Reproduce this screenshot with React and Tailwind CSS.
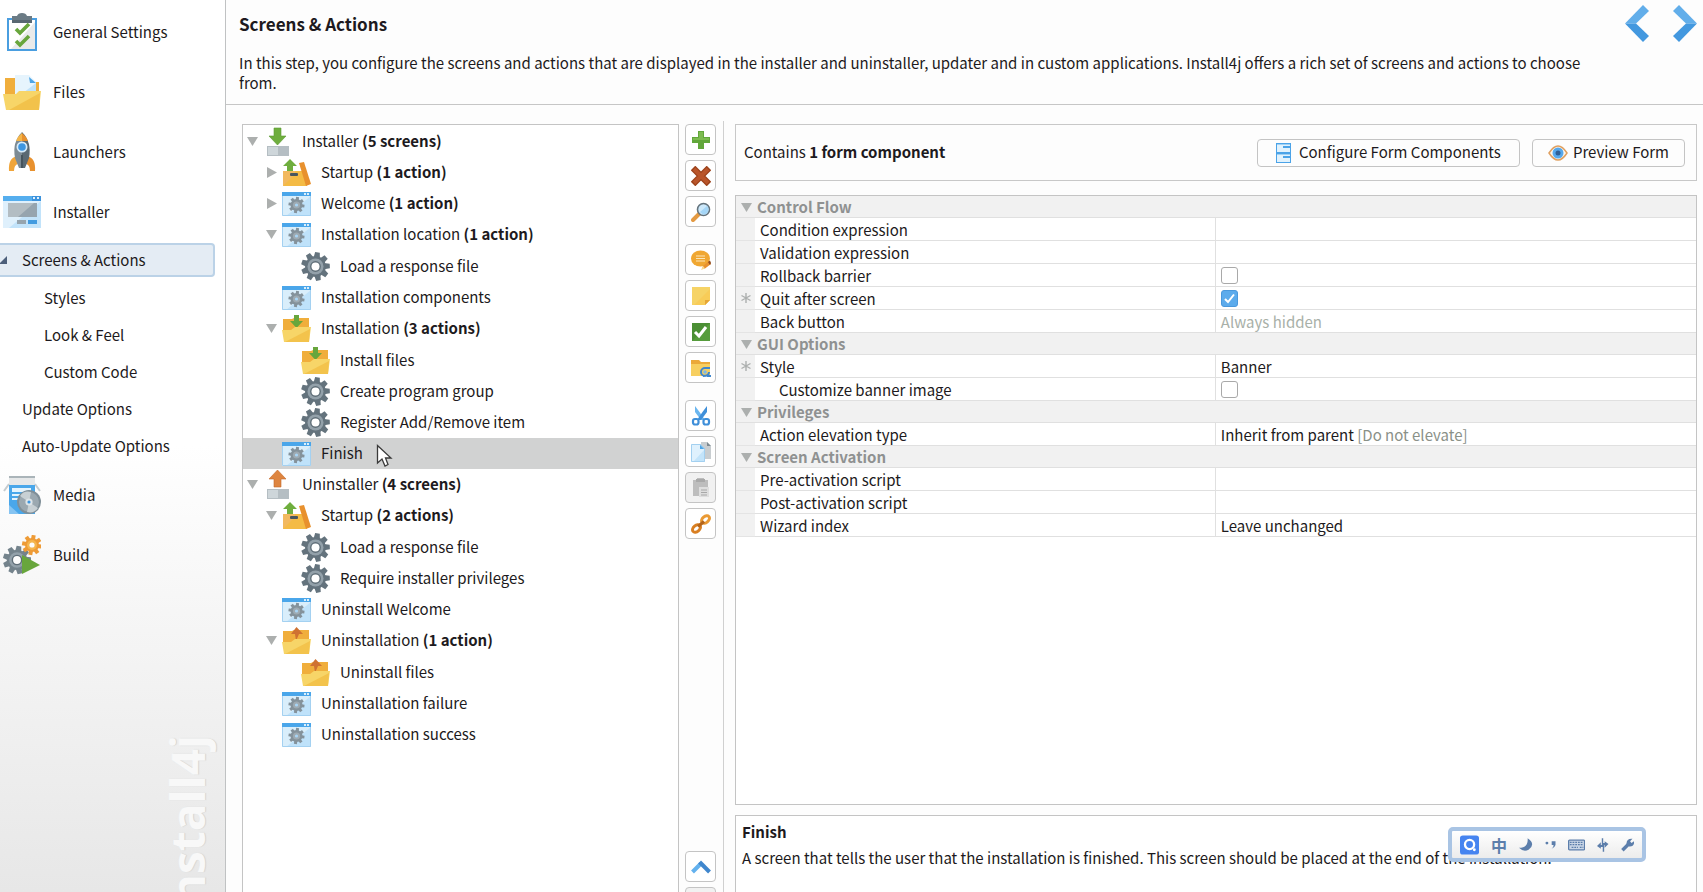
import { useState } from "react";

const GEAR_ANGLES = [0, 45, 90, 135, 180, 225, 270, 315];
const BIG_GEAR_ANGLES = [0, 40, 80, 120, 160, 200, 240, 280, 320];

function GearShape({ cx, cy, r, fill, hole }) {
	const w = r * 0.22;
	return (
		<g fill={fill}>
			{BIG_GEAR_ANGLES.map((a) => (
				<path
					key={a}
					d={`M${cx - w} ${cy - r * 0.6} L${cx - w * 0.75} ${cy - r} H${cx + w * 0.75} L${cx + w} ${cy - r * 0.6} Z`}
					transform={`rotate(${a + 8} ${cx} ${cy})`}
				/>
			))}
			<circle cx={cx} cy={cy} r={r * 0.73} />
			<circle cx={cx} cy={cy} r={r * 0.56} fill="#93a1aa" />
			<circle cx={cx} cy={cy} r={r * 0.38} fill="#5f6e78" />
			<circle cx={cx} cy={cy} r={r * 0.28} fill={hole} />
		</g>
	);
}

function ClipboardIcon() {
	return (
		<svg width="38" height="40" viewBox="0 0 38 40">
			<rect x="4" y="6" width="30" height="33" fill="#4a9ee0" />
			<rect x="6" y="8" width="26" height="29" fill="#ffffff" />
			<path d="M32 10 V37 H8 Z" fill="#e9eaea" />
			<path d="M9 4 H14 Q15 1 19 1 Q23 1 24 4 H29 V11 H9 Z" fill="#6b7b85" />
			<path d="M9 8 H29 V11 H9 Z" fill="#596872" />
			<path d="M13 17 L17 21 L26 12" fill="none" stroke="#68a63c" strokeWidth="3.6" />
			<path d="M13 29 L17 33 L26 24" fill="none" stroke="#68a63c" strokeWidth="3.6" />
		</svg>
	);
}

function FilesIcon() {
	return (
		<svg width="38" height="38" viewBox="0 0 38 38">
			<path d="M2 5 H12 V32 H2 Z" fill="#f0ae3c" />
			<path d="M30 9 H36 V30 H30 Z" fill="#f0ae3c" />
			<path d="M12 2 H26 L33 9 V22 H12 Z" fill="#e6f4fd" />
			<path d="M20 20 L33 10 V22 H18 Z" fill="#bfe2fa" />
			<path d="M26 4 L33 10 H27 Z" fill="#4ea5e6" />
			<path d="M0 21 H13 L16 18 H38 L36 37 H3 Z" fill="#f7d568" />
			<path d="M37 20 L36 37 H6 Z" fill="#f2c24b" />
		</svg>
	);
}

function RocketIcon() {
	return (
		<svg width="38" height="40" viewBox="0 0 38 40">
			<path d="M14 24 Q5 26 6 39 H11 Q11 33 15 32 Z" fill="#f0a53a" />
			<path d="M24 24 Q33 26 32 39 H27 Q27 33 23 32 Z" fill="#e8912e" />
			<path d="M19 0 Q9 10 12 26 L16 36 H19 Z" fill="#7d8b94" />
			<path d="M19 0 Q29 10 26 26 L22 36 H19 Z" fill="#5a6973" />
			<path d="M19 1 Q15 4 13 9 H19 Z" fill="#f4b548" />
			<path d="M19 1 Q23 4 25 9 H19 Z" fill="#e8912e" />
			<circle cx="19" cy="15" r="5.5" fill="#d6ebfa" />
			<circle cx="19" cy="15" r="3.8" fill="#3f96e0" />
			<path d="M18 23 H20 V36 H18 Z" fill="#46545d" />
		</svg>
	);
}

function InstallerIcon() {
	return (
		<svg width="38" height="32" viewBox="0 0 38 32">
			<rect width="38" height="32" fill="#dff0fc" />
			<path d="M38 5 V32 H6 Z" fill="#c2e3fa" />
			<rect width="38" height="5" fill="#55aeee" />
			<rect x="29" width="9" height="5" fill="#3c92dc" />
			<rect x="30" y="1" width="2" height="2" fill="#dff0fc" />
			<rect x="34" y="1" width="2" height="2" fill="#dff0fc" />
			<rect x="5" y="7" width="29" height="14" fill="#b3bdc3" />
			<path d="M34 7 V21 H15 L31 7 Z" fill="#96a4ae" />
			<rect x="14" y="24" width="9" height="4" fill="#96a4ae" />
			<rect x="25" y="24" width="9" height="4" fill="#429be0" />
		</svg>
	);
}

function MediaIcon() {
	return (
		<svg width="38" height="40" viewBox="0 0 38 40">
			<rect x="6" y="1" width="26" height="9" fill="#e6e8e9" />
			<rect x="6" y="1" width="26" height="2" fill="#aab4b9" />
			<path d="M6 9 L1 16 M32 9 L37 16" stroke="#c5ccd0" strokeWidth="2" fill="none" />
			<rect x="6" y="10" width="26" height="29" fill="#4aa7ea" />
			<path d="M6 39 V30 L16 39 Z" fill="#86c4f2" />
			<rect x="9" y="13" width="19" height="4" fill="#e5f4fd" />
			<path d="M9 20 H17 M9 24 H15" stroke="#e5f4fd" strokeWidth="2" />
			<circle cx="26" cy="27" r="12" fill="#808f98" />
			<circle cx="26" cy="27" r="10" fill="#9ba8b0" />
			<path d="M26 27 L17 21 A10 10 0 0 1 28 17 Z M26 27 L35 33 A10 10 0 0 1 24 37 Z" fill="#c8d0d4" />
			<circle cx="26" cy="27" r="3.6" fill="#dde4e8" />
			<circle cx="26" cy="27" r="1.6" fill="#3c96df" />
		</svg>
	);
}

function BuildIcon() {
	return (
		<svg width="38" height="40" viewBox="0 0 38 40">
			<GearShape cx={14} cy={25} r={14} fill="#74838c" hole="#fcfcfc" />
			<g fill="#ee9b36">
				{GEAR_ANGLES.map((a) => (
					<rect key={a} x="27" y="0" width="4" height="6" transform={`rotate(${a + 10} 29 10)`} />
				))}
				<circle cx="29" cy="10" r="7" />
				<circle cx="29" cy="10" r="5" fill="#f5b64e" />
				<circle cx="29" cy="10" r="2.6" fill="#fcfcfc" />
			</g>
			<path d="M19 20 L37 30 L19 39 Z" fill="#68a63c" />
		</svg>
	);
}

function DriveIcon({ up }) {
	return (
		<svg width="29" height="30" viewBox="0 0 29 30">
			<rect x="4" y="19" width="22" height="10" fill="#b5bec3" />
			<rect x="5" y="20" width="10" height="8" fill="#ced6da" />
			{up ? (
				<path d="M14.500 0 L23 9 H18 V17 H11 V9 H6 Z" fill="#de8540" stroke="#c4692a" strokeWidth="0.6" />
			) : (
				<path d="M11 1 H18 V9 H23 L14.500 18 L6 9 H11 Z" fill="#6fae3e" stroke="#5b9a33" strokeWidth="0.6" />
			)}
		</svg>
	);
}

function StartupIcon() {
	return (
		<svg width="29" height="29" viewBox="0 0 29 29">
			<path d="M1 13 H21 V28 H1 Z" fill="#f2b95f" />
			<path d="M13 13 H21 L25 28 H1 L13 16 Z" fill="#f4bb45" />
			<path d="M17 5 L22 4 L29 26 L24 28 Z" fill="#e8912e" />
			<rect x="8" y="15" width="8" height="3" rx="1" fill="#48565e" />
			<path d="M8 1 L15 8 H11 V13 H5 V8 H1 Z" fill="#6fae3e" />
		</svg>
	);
}

function WindowIcon() {
	return (
		<svg width="29" height="24" viewBox="0 0 29 24">
			<rect width="29" height="24" fill="#d9eefb" />
			<path d="M29 4 V24 H4 Z" fill="#bfe2fa" />
			<rect width="29" height="4" fill="#4aa6ea" />
			<path d="M22 1 H24 V3 H22 Z M25 1 H27 V3 H25 Z" fill="#d9eefb" />
			<path d="M0.500 4 V23.500 H28.500 V4" fill="none" stroke="#a4d1f1" />
			<g fill="#84929b">
				{GEAR_ANGLES.map((a) => (
					<rect key={a} x="13" y="5" width="3" height="5" transform={`rotate(${a + 8} 14.500 13)`} />
				))}
				<circle cx="14.500" cy="13" r="6" />
				<circle cx="14.500" cy="13" r="3.600" fill="#9eaab2" />
				<circle cx="14.500" cy="13" r="1.600" fill="#a8d5f5" />
			</g>
		</svg>
	);
}

function GearIcon() {
	return (
		<svg width="29" height="29" viewBox="0 0 29 29">
			<GearShape cx={14.5} cy={14.5} r={14.3} fill="#64737d" hole="#ffffff" />
		</svg>
	);
}

function FolderIcon({ up }) {
	return (
		<svg width="29" height="28" viewBox="0 0 29 28">
			<path d="M1 4 H10 L12 3 H27 V20 H1 Z" fill="#f0ae3c" />
			{up ? (
				<path d="M14.500 0 L21 7 H17 L14 14 L13 7 H9 Z" fill="#cf7232" />
			) : (
				<path d="M12 0 H17 V6 H21 L14.500 13 L8 6 H12 Z" fill="#68a63c" />
			)}
			<path d="M0 15 H9 L13 12 H29 L27 27 H2 Z" fill="#f7d568" />
			<path d="M28 14 L27 27 H3 Z" fill="#f3c34c" />
		</svg>
	);
}

const TREE_ICONS = {
	install: <DriveIcon />,
	uninstall: <DriveIcon up />,
	startup: <StartupIcon />,
	window: <WindowIcon />,
	gear: <GearIcon />,
	folderIn: <FolderIcon />,
	folderOut: <FolderIcon up />,
};

const TREE = [
	{
		label: "Installer",
		count: "(5 screens)",
		icon: "install",
		state: "open",
		children: [
			{ label: "Startup", count: "(1 action)", icon: "startup", state: "closed" },
			{ label: "Welcome", count: "(1 action)", icon: "window", state: "closed" },
			{
				label: "Installation location",
				count: "(1 action)",
				icon: "window",
				state: "open",
				children: [{ label: "Load a response file", icon: "gear" }],
			},
			{ label: "Installation components", icon: "window" },
			{
				label: "Installation",
				count: "(3 actions)",
				icon: "folderIn",
				state: "open",
				children: [
					{ label: "Install files", icon: "folderIn" },
					{ label: "Create program group", icon: "gear" },
					{ label: "Register Add/Remove item", icon: "gear" },
				],
			},
			{ label: "Finish", icon: "window" },
		],
	},
	{
		label: "Uninstaller",
		count: "(4 screens)",
		icon: "uninstall",
		state: "open",
		children: [
			{
				label: "Startup",
				count: "(2 actions)",
				icon: "startup",
				state: "open",
				children: [
					{ label: "Load a response file", icon: "gear" },
					{ label: "Require installer privileges", icon: "gear" },
				],
			},
			{ label: "Uninstall Welcome", icon: "window" },
			{
				label: "Uninstallation",
				count: "(1 action)",
				icon: "folderOut",
				state: "open",
				children: [{ label: "Uninstall files", icon: "folderOut" }],
			},
			{ label: "Uninstallation failure", icon: "window" },
			{ label: "Uninstallation success", icon: "window" },
		],
	},
];

const INDENTS = ["pl-0", "pl-[19px]", "pl-[38px]"];

function Triangle({ closed }) {
	return (
		<svg width="11" height="11" viewBox="0 0 11 11" fill="#acafae">
			{closed ? <path d="M1 0 L11 5.500 L1 11 Z" /> : <path d="M0 1 H11 L5.500 10 Z" />}
		</svg>
	);
}

function TreeNode({ node, depth, selected, onSelect }) {
	const active = selected === node.label;
	return (
		<li>
			<div className={`flex h-[31px] items-center ${INDENTS[depth]} ${active ? "bg-[#d1d2d2]" : ""}`}>
				<span className="flex w-5 shrink-0 pl-1">
					{node.state && (
						<button type="button" aria-label={`Toggle ${node.label}`}>
							<Triangle closed={node.state === "closed"} />
						</button>
					)}
				</span>
				<button
					type="button"
					onClick={() => onSelect(node.label)}
					className="flex h-full min-w-0 flex-1 items-center gap-2.5 text-left whitespace-nowrap"
				>
					{TREE_ICONS[node.icon]}
					<span>
						{node.label} {node.count && <b>{node.count}</b>}
					</span>
				</button>
			</div>
			{node.children && (
				<ul className={depth === 1 ? "mt-px" : ""}>
					{node.children.map((child) => (
						<TreeNode key={child.label} node={child} depth={depth + 1} selected={selected} onSelect={onSelect} />
					))}
				</ul>
			)}
		</li>
	);
}

function PlusIcon() {
	return (
		<svg width="20" height="20" viewBox="0 0 20 20">
			<path d="M7 1 H13 V7 H19 V13 H13 V19 H7 V13 H1 V7 H7 Z" fill="#62a73b" />
			<path d="M8 2 H12 V8 H18 V10 H2 V8 H8 Z" fill="#7dbb50" />
		</svg>
	);
}

function CrossIcon() {
	return (
		<svg width="20" height="20" viewBox="0 0 20 20">
			<path d="M2 2 L18 18 M18 2 L2 18" stroke="#9c421a" strokeWidth="6.500" />
			<path d="M3 3 L17 17 M17 3 L3 17" stroke="#b9552a" strokeWidth="4" />
		</svg>
	);
}

function SearchIcon() {
	return (
		<svg width="20" height="20" viewBox="0 0 20 20">
			<path d="M9 11 L2 18" stroke="#e39a43" strokeWidth="4" strokeLinecap="round" />
			<circle cx="12.500" cy="7.500" r="6" fill="#cde9fb" stroke="#64737d" strokeWidth="1.600" />
			<path d="M9 10 L16 4 A5 5 0 0 1 12 12.500 Z" fill="#a5d6f7" />
		</svg>
	);
}

function CommentIcon() {
	return (
		<svg width="20" height="20" viewBox="0 0 20 20">
			<ellipse cx="9.500" cy="8.500" rx="9.500" ry="8" fill="#f0a732" />
			<path d="M5 6 H14 M5 8.500 H14 M5 11 H14" stroke="#fbe6b8" strokeWidth="1.200" />
			<path d="M11 19 L12 16 L18 11 L20 14 L14 18.500 Z" fill="#e8912e" />
			<path d="M17 12 L19 10.500 L20 13 L19 15 Z" fill="#8d4a20" />
			<path d="M10 20 L12 16 L14 18.500 Z" fill="#f9d98e" />
		</svg>
	);
}

function NoteIcon() {
	return (
		<svg width="20" height="20" viewBox="0 0 20 20">
			<path d="M1 1 H19 V14 L14 19 H1 Z" fill="#f6d366" />
			<path d="M19 3 V14 L14 19 H3 Z" fill="#f8cc58" />
			<path d="M14 14 H19 L14 19 Z" fill="#e5a637" />
		</svg>
	);
}

function TickIcon() {
	return (
		<svg width="20" height="20" viewBox="0 0 20 20">
			<rect x="1" y="1" width="18" height="18" fill="#4b8f34" />
			<path d="M19 1 V19 H1 Z" fill="#569c3c" />
			<path d="M4 10 L8 14 L15 5" fill="none" stroke="#ffffff" strokeWidth="3" />
		</svg>
	);
}

function LinkedFolderIcon() {
	return (
		<svg width="20" height="20" viewBox="0 0 20 20">
			<path d="M0 2 H8 L10 4 H19 V18 H0 Z" fill="#eba93a" />
			<path d="M0 6 H19 V18 H0 Z" fill="#f7cf60" />
			<path d="M19 10 H14 A4 4 0 1 0 18 14 Q18 18 12 18" fill="none" stroke="#3e86cd" strokeWidth="2" />
			<circle cx="14" cy="14" r="1.800" fill="#7ab8ec" />
			<path d="M16 18 H20" stroke="#3e86cd" strokeWidth="2" />
		</svg>
	);
}

function ScissorsIcon() {
	return (
		<svg width="20" height="20" viewBox="0 0 20 20">
			<path d="M4 0 L8.500 6 L14 14 L10 14 L4 6 Z" fill="#6bb6ef" />
			<path d="M16 0 L11.500 6 L6 14 L10 14 L16 6 Z" fill="#3f8fd9" />
			<rect x="2" y="13" width="5.500" height="5.500" rx="2" fill="none" stroke="#3f8fd9" strokeWidth="2.200" />
			<rect x="12.500" y="13" width="5.500" height="5.500" rx="2" fill="none" stroke="#3f8fd9" strokeWidth="2.200" />
		</svg>
	);
}

function CopyIcon() {
	return (
		<svg width="20" height="20" viewBox="0 0 20 20">
			<path d="M10 0 H16 L20 4 V17 H10 Z" fill="#c8cdd0" />
			<path d="M16 0 L20 4 H16 Z" fill="#7d8a92" />
			<path d="M0 2 H9 L14 7 V20 H0 Z" fill="#dff1fd" />
			<path d="M14 7 V20 H2 Z" fill="#c3e4fa" />
			<path d="M9 2 L14 7 H9 Z" fill="#4ea5e6" />
			<path d="M0.500 2.500 H9 L13.500 7 V19.500 H0.500 Z" fill="none" stroke="#a3d0f0" />
		</svg>
	);
}

function PasteIcon() {
	return (
		<svg width="20" height="20" viewBox="0 0 20 20">
			<path d="M2 2 H6 V0 H13 V2 H17 V18 H2 Z" fill="#bdbdbd" />
			<rect x="5" y="1" width="9" height="3" fill="#a9a9a9" />
			<rect x="8" y="9" width="10" height="10" fill="#dedede" />
			<path d="M10 12 H16 M10 14.500 H16 M10 17 H16" stroke="#a8a8a8" />
		</svg>
	);
}

function ChainIcon() {
	return (
		<svg width="20" height="20" viewBox="0 0 20 20" fill="none" strokeWidth="3">
			<ellipse cx="5.500" cy="14.500" rx="4.500" ry="3" stroke="#d97f22" transform="rotate(-40 5.500 14.500)" />
			<ellipse cx="14.500" cy="5.500" rx="4.500" ry="3" stroke="#ea9a34" transform="rotate(-40 14.500 5.500)" />
			<path d="M7 12.500 L13 7.500" stroke="#b5651b" />
		</svg>
	);
}

function UpIcon() {
	return (
		<svg width="20" height="14" viewBox="0 0 20 14" fill="none" strokeWidth="4">
			<path d="M1.500 12 L10 3.500" stroke="#63b1ee" />
			<path d="M8.600 2 L18.500 12" stroke="#3f86cd" />
		</svg>
	);
}

const TOOL_GROUPS = [
	[
		{ label: "Add", icon: <PlusIcon /> },
		{ label: "Delete", icon: <CrossIcon /> },
		{ label: "Search", icon: <SearchIcon /> },
	],
	[
		{ label: "Comment", icon: <CommentIcon /> },
		{ label: "Note", icon: <NoteIcon /> },
		{ label: "Enable", icon: <TickIcon /> },
		{ label: "Link folder", icon: <LinkedFolderIcon /> },
	],
	[
		{ label: "Cut", icon: <ScissorsIcon /> },
		{ label: "Copy", icon: <CopyIcon /> },
		{ label: "Paste", icon: <PasteIcon />, disabled: true },
		{ label: "Link", icon: <ChainIcon /> },
	],
];

function ToolButton({ label, icon, disabled }) {
	return (
		<button
			type="button"
			aria-label={label}
			disabled={disabled}
			className="flex h-[31px] w-[31px] shrink-0 items-center justify-center rounded-[4px] border border-[#c4c4c4] bg-white disabled:bg-[#f1f1f1]"
		>
			{icon}
		</button>
	);
}

const SECTIONS = [
	{
		title: "Control Flow",
		rows: [
			{ label: "Condition expression" },
			{ label: "Validation expression" },
			{ label: "Rollback barrier", check: false },
			{ label: "Quit after screen", check: true, star: true },
			{ label: "Back button", value: "Always hidden", muted: true },
		],
	},
	{
		title: "GUI Options",
		rows: [
			{ label: "Style", value: "Banner", star: true },
			{ label: "Customize banner image", check: false, nested: true },
		],
	},
	{
		title: "Privileges",
		rows: [{ label: "Action elevation type", value: "Inherit from parent", hint: "[Do not elevate]" }],
	},
	{
		title: "Screen Activation",
		rows: [
			{ label: "Pre-activation script" },
			{ label: "Post-activation script" },
			{ label: "Wizard index", value: "Leave unchanged" },
		],
	},
];

function Checkbox({ id, initial }) {
	const [checked, setChecked] = useState(initial);
	return (
		<span className="relative block h-[17px] w-[17px]">
			<input
				id={id}
				type="checkbox"
				checked={checked}
				onChange={(e) => setChecked(e.target.checked)}
				className="block h-full w-full appearance-none rounded-[3px] border border-[#a9a9a9] bg-white checked:border-[#4a98dc] checked:bg-[#5cabec]"
			/>
			{checked && (
				<svg className="pointer-events-none absolute inset-0" width="17" height="17" viewBox="0 0 17 17">
					<path d="M4 9 L7 12 L13 4.500" fill="none" stroke="#ffffff" strokeWidth="2" />
				</svg>
			)}
		</span>
	);
}

function PropertyRow({ row }) {
	const id = row.label.toLowerCase().replace(/\W+/g, "-");
	return (
		<tr className="h-[23px]">
			<td className="border-b border-[#e4e4e4] bg-[#f1f1f1]">
				{row.star && (
					<svg className="mx-auto" width="10" height="10" viewBox="0 0 10 10" stroke="#acafae" strokeWidth="1.400">
						<path d="M5 0 V10 M0.500 2.500 L9.500 7.500 M9.500 2.500 L0.500 7.500" />
					</svg>
				)}
			</td>
			<th
				scope="row"
				className={`border-r border-b border-[#e0e0e0] pt-0.5 text-left font-normal ${row.nested ? "pl-6" : "pl-[5px]"}`}
			>
				{row.check === undefined ? row.label : <label htmlFor={id}>{row.label}</label>}
			</th>
			<td className={`border-b border-[#e0e0e0] pl-[5px] ${row.check === undefined ? "pt-0.5" : ""} ${row.muted ? "text-[#a8b0a8]" : ""}`}>
				{row.check !== undefined && <Checkbox id={id} initial={row.check} />}
				{row.value} {row.hint && <span className="text-[#8a9188]">{row.hint}</span>}
			</td>
		</tr>
	);
}

function PropertyTable() {
	return (
		<table className="w-full table-fixed border-separate border-spacing-0 leading-5">
			<colgroup>
				<col className="w-[19px]" />
				<col className="w-[48%]" />
				<col />
			</colgroup>
			{SECTIONS.map((section) => (
				<tbody key={section.title}>
					<tr className="h-[22px] bg-[#f1f1f1]">
						<th colSpan={3} className="border-b border-[#e0e0e0] pt-px text-left font-bold text-[#8f9191]">
							<span className="flex items-center gap-[5px] pl-[5px]">
								<Triangle />
								{section.title}
							</span>
						</th>
					</tr>
					{section.rows.map((row) => (
						<PropertyRow key={row.label} row={row} />
					))}
				</tbody>
			))}
		</table>
	);
}

function NavItem({ label, icon }) {
	return (
		<a href="#" className="flex h-[60px] items-center gap-3 pl-[3px]">
			<span className="flex w-[38px] justify-center">{icon}</span>
			{label}
		</a>
	);
}

function SubItem({ label, deep }) {
	return (
		<a href="#" className={`flex h-[37px] items-center ${deep ? "pl-11" : "pl-[22px]"}`}>
			{label}
		</a>
	);
}

function Sidebar() {
	return (
		<nav className="relative w-[226px] shrink-0 overflow-hidden border-r border-[#c0c2c3] bg-linear-to-b from-white from-50% to-[#e7e7e7] pt-0.5">
			<NavItem label="General Settings" icon={<ClipboardIcon />} />
			<NavItem label="Files" icon={<FilesIcon />} />
			<NavItem label="Launchers" icon={<RocketIcon />} />
			<NavItem label="Installer" icon={<InstallerIcon />} />
			<a
				href="#"
				className="mt-px mr-2.5 mb-[3px] flex h-[34px] items-center rounded-r-[4px] border-2 border-l-0 border-[#bbd2e7] bg-[#e4ecf4]"
			>
				<svg width="7" height="8" viewBox="0 0 7 8" className="mr-[15px]">
					<path d="M7 0 V8 H0 V7 Z" fill="#4c5f7a" />
				</svg>
				Screens &amp; Actions
			</a>
			<SubItem label="Styles" deep />
			<SubItem label="Look & Feel" deep />
			<SubItem label="Custom Code" deep />
			<SubItem label="Update Options" />
			<SubItem label="Auto-Update Options" />
			<NavItem label="Media" icon={<MediaIcon />} />
			<NavItem label="Build" icon={<BuildIcon />} />
			<span
				aria-hidden="true"
				className="absolute top-[735px] right-2 rotate-180 font-['Open_Sans',sans-serif] text-[46px] leading-[60px] font-bold whitespace-nowrap text-[#f8f8f8] [text-shadow:0_1px_1px_#cfd2d2] [writing-mode:vertical-rl]"
			>
				install4j
			</span>
		</nav>
	);
}

function Header() {
	return (
		<header className="flex h-[105px] shrink-0 border-b border-[#c6c6c6] pl-[13px]">
			<div className="min-w-0 flex-1 pt-3">
				<h1 className="text-[17px] leading-6 font-bold">Screens &amp; Actions</h1>
				<p className="mt-[17px] leading-5">
					In this step, you configure the screens and actions that are displayed in the installer and uninstaller,
					updater and in custom applications. Install4j offers a rich set of screens and actions to choose from.
				</p>
			</div>
			<div className="ml-4 flex gap-6 pt-[5px] pr-1.5">
				<button type="button" aria-label="Previous" className="self-start">
					<svg width="24" height="37" viewBox="0 0 24 37">
						<path d="M0 18.500 L18 0 L24 6 L11 18.500 Z" fill="#62aeea" />
						<path d="M0 18.500 L18 37 L24 31 L11 18.500 Z" fill="#4398df" />
					</svg>
				</button>
				<button type="button" aria-label="Next" className="self-start">
					<svg width="24" height="37" viewBox="0 0 24 37">
						<path d="M24 18.500 L6 0 L0 6 L13 18.500 Z" fill="#62aeea" />
						<path d="M24 18.500 L6 37 L0 31 L13 18.500 Z" fill="#4398df" />
					</svg>
				</button>
			</div>
		</header>
	);
}

function FormBar() {
	return (
		<div className="flex h-[57px] shrink-0 items-center gap-3 border border-[#c8c8c8] pr-[11px] pl-2">
			<p className="flex-1">
				Contains <b>1 form component</b>
			</p>
			<button type="button" className="flex h-7 items-center gap-2 rounded-[4px] border border-[#c4c4c4] px-[18px]">
				<svg width="15" height="20" viewBox="0 0 15 20">
					<rect width="15" height="20" fill="#4ba3e8" />
					<path d="M1 1 H14 V3 H7 V5 H14 V9 H1 Z M1 11 H14 V13 H7 V15 H14 V19 H1 Z" fill="#e1f2fd" />
					<path d="M1 1 H14 V2 H1 Z M1 11 H14 V12 H1 Z" fill="#9fd2f6" />
				</svg>
				Configure Form Components
			</button>
			<button type="button" className="flex h-7 items-center gap-[5px] rounded-[4px] border border-[#c4c4c4] px-[15px]">
				<svg width="20" height="16" viewBox="0 0 20 16">
					<path d="M1 8 Q10 -6 19 8 Q10 22 1 8 Z" fill="#fdf6ec" stroke="#e0a060" strokeWidth="1.500" />
					<circle cx="10" cy="8" r="5.500" fill="#56a8ec" />
					<circle cx="10" cy="8" r="2.500" fill="#2f5f97" />
				</svg>
				Preview Form
			</button>
		</div>
	);
}

function InputMethodBar() {
	return (
		<div className="absolute right-[57px] bottom-[30px] flex h-[35px] w-[198px] items-center gap-3 rounded-[5px] border-4 border-[#a9c4e4] bg-linear-to-b from-white to-[#ececec] px-2 text-[#5c7eab]">
			<svg width="20" height="20" viewBox="0 0 20 20">
				<rect width="20" height="20" rx="3" fill="#4684f0" />
				<circle cx="10" cy="9.500" r="4.800" fill="none" stroke="#ffffff" strokeWidth="2.400" />
				<circle cx="15" cy="15" r="1.500" fill="#ffffff" />
			</svg>
			<span className="text-base leading-5 font-bold">中</span>
			<svg width="14" height="14" viewBox="0 0 14 14">
				<path d="M9 0 Q18 6 10 12 Q5 15 0 10 Q10 10 9 0 Z" fill="#5c7eab" />
			</svg>
			<svg width="12" height="10" viewBox="0 0 12 10" fill="#5c7eab">
				<circle cx="2" cy="3" r="1.500" />
				<path d="M7 1 H11 V5 Q10 8 7 9 Q9 7 9 5 H7 Z" />
			</svg>
			<svg width="18" height="12" viewBox="0 0 19 12">
				<rect x="0.700" y="0.700" width="17.600" height="10.600" rx="1" fill="#c9d6e6" stroke="#5c7eab" strokeWidth="1.400" />
				<path d="M2 3 H17 M2 5.500 H17 M4 8.500 H11 M13 8.500 H17" stroke="#5c7eab" strokeWidth="1.400" strokeDasharray="2 1" />
			</svg>
			<svg width="12" height="14" viewBox="0 0 12 14" fill="#5c7eab">
				<path d="M0 8 L4 4 V7 H5 V0 H6.500 V9 H4 V11 Z M12 6 L8 10 V7 H7.500 V14 H6 V5 H8 V3 Z" />
			</svg>
			<svg width="14" height="14" viewBox="0 0 14 14">
				<path d="M1.500 12.500 L8 6" stroke="#5c7eab" strokeWidth="3.600" />
				<path d="M12 0.500 L9.500 3 L11 5 L13.800 3 Q14 9 8.500 8.500 L5.800 6 Q5.500 0 12 0.500 Z" fill="#5c7eab" />
			</svg>
		</div>
	);
}

export default function App() {
	const [selected, setSelected] = useState("Finish");

	return (
		<div className="relative flex h-screen overflow-hidden bg-[#fdfdfd] font-['Noto_Sans_CJK_SC',sans-serif] text-[15px] text-[#1d1a20]">
			<Sidebar />
			<div className="flex min-w-0 flex-1 flex-col">
				<Header />
				<main className="flex min-h-0 flex-1 pr-1.5 pl-4">
					<section className="mt-[19px] w-[437px] shrink-0 overflow-hidden border border-b-0 border-[#c4c4c4] bg-white">
						<ul className="pt-px">
							{TREE.map((node) => (
								<TreeNode key={node.label} node={node} depth={0} selected={selected} onSelect={setSelected} />
							))}
						</ul>
					</section>
					<div className="mt-4 flex w-[45px] shrink-0 flex-col gap-[17px] border-r border-[#d0d0d0] pt-[3px] pl-1.5">
						{TOOL_GROUPS.map((group) => (
							<div key={group[0].label} className="flex flex-col gap-[5px]">
								{group.map((tool) => (
									<ToolButton key={tool.label} {...tool} />
								))}
							</div>
						))}
						<div className="mt-auto flex h-[41px] shrink-0 flex-col gap-[5px] overflow-hidden">
							<ToolButton label="Move up" icon={<UpIcon />} />
							<ToolButton label="Move down" disabled />
						</div>
					</div>
					<section className="flex min-w-0 flex-1 flex-col pt-[19px] pl-[11px]">
						<FormBar />
						<div className="mt-[14px] min-h-0 flex-1 border border-[#c4c4c4] bg-white">
							<PropertyTable />
						</div>
						<div className="mt-2.5 h-[77px] shrink-0 border border-b-0 border-[#c4c4c4] bg-white px-1.5 pt-1">
							<h2 className="leading-6 font-bold">Finish</h2>
							<p className="leading-7">
								A screen that tells the user that the installation is finished. This screen should be placed at the end
								of the installation.
							</p>
						</div>
					</section>
				</main>
			</div>
			<svg
				className="pointer-events-none absolute top-[444px] left-[376px]"
				width="17"
				height="24"
				viewBox="0 0 17 24"
				aria-hidden="true"
			>
				<path d="M1.500 1.500 V19 L6 15 L9 22 L12 20.500 L9.500 14 H15 Z" fill="#ffffff" stroke="#3a3a3a" strokeWidth="1.300" />
			</svg>
			<InputMethodBar />
		</div>
	);
}
